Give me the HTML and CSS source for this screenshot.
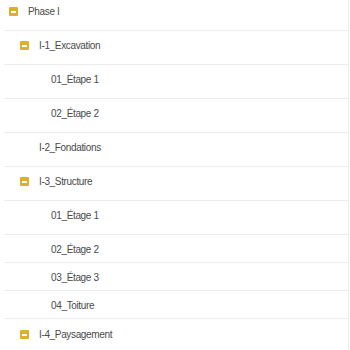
FILE: index.html
```html
<!DOCTYPE html>
<html lang="fr">
<head>
    <meta charset="UTF-8">
    <meta name="viewport" content="width=device-width, initial-scale=1.0">
    <title>Arborescence du projet</title>
    <link rel="stylesheet" href="styles.css">
</head>
<body>
    <div class="tree">
        <div class="row level-0"><span class="toggle"></span><span class="label">Phase I</span></div>
        <div class="row level-1"><span class="toggle"></span><span class="label">I-1_Excavation</span></div>
        <div class="row level-2"><span class="spacer"></span><span class="label">01_Étape 1</span></div>
        <div class="row level-2"><span class="spacer"></span><span class="label">02_Étape 2</span></div>
        <div class="row level-1"><span class="spacer"></span><span class="label">I-2_Fondations</span></div>
        <div class="row level-1"><span class="toggle"></span><span class="label">I-3_Structure</span></div>
        <div class="row level-2"><span class="spacer"></span><span class="label">01_Étage 1</span></div>
        <div class="row compact level-2"><span class="spacer"></span><span class="label">02_Étage 2</span></div>
        <div class="row compact level-2"><span class="spacer"></span><span class="label">03_Étage 3</span></div>
        <div class="row compact level-2"><span class="spacer"></span><span class="label">04_Toiture</span></div>
        <div class="row compact level-1 last"><span class="toggle"></span><span class="label">I-4_Paysagement</span></div>
    </div>
</body>
</html>
```

FILE: styles.css
```css
body {
    margin: 0;
    font-family: "Liberation Sans", Arial, sans-serif;
    background: #fff;
    overflow: hidden;
}
.tree {
    margin: -3px 1px 0 4px;
    border-right: 1px solid #eeeeee;
    height: 360px;
}
.row {
    display: flex;
    align-items: center;
    box-sizing: border-box;
    height: 34px;
    padding-bottom: 4px;
    border-bottom: 1px solid #ececec;
    font-size: 10px;
    letter-spacing: -0.35px;
    color: #4a4a4a;
}
.row.compact {
    height: 28px;
    padding-bottom: 0;
    padding-top: 2px;
}
.row.last {
    border-bottom: none;
}
.level-0 { padding-left: 5px; }
.level-1 { padding-left: 16px; }
.level-2 { padding-left: 28px; }
.toggle,
.spacer {
    width: 9px;
    height: 9px;
    margin-right: 10px;
    flex-shrink: 0;
}
.toggle {
    position: relative;
    background: #dcb12a;
    border-radius: 1px;
}
.toggle::after {
    content: "";
    position: absolute;
    left: 2px;
    top: 4px;
    width: 5px;
    height: 2px;
    background: #fff;
}
```
